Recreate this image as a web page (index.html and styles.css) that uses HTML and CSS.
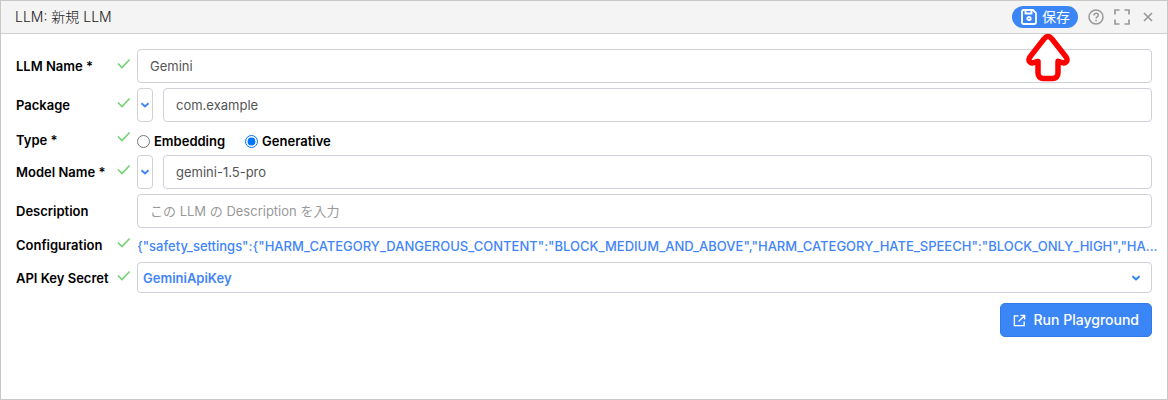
FILE: index.html
```html
<!DOCTYPE html>
<html lang="ja">
<head>
<meta charset="utf-8">
<meta name="viewport" content="width=device-width, initial-scale=1">
<title>LLM: 新規 LLM</title>
<link rel="stylesheet" href="styles.css">
</head>
<body>
<svg class="symbols" aria-hidden="true">
  <symbol id="check" viewBox="0 0 14 12"><path d="M1 5.500 5 9.500 12.600 1.500" fill="none" stroke="currentColor" stroke-width="1.700"/></symbol>
  <symbol id="chevron" viewBox="0 0 10 8"><path d="M1.500 2.200 5 5.400 8.500 2.200" fill="none" stroke="currentColor" stroke-width="2"/></symbol>
</svg>
<main class="dialog">
  <header class="titlebar">
    <h1 class="title">LLM: 新規 LLM</h1>
    <div class="actions">
      <div class="save-wrap">
        <button class="save" type="submit" form="llm-form">
          <svg class="save-icon" viewBox="0 0 16 16" fill="none" stroke="currentColor" stroke-width="1.800" aria-hidden="true"><path d="M2.500 1H12l3 3v9.500a1.500 1.500 0 0 1-1.500 1.500h-11A1.500 1.500 0 0 1 1 13.500v-11A1.500 1.500 0 0 1 2.500 1Z"/><path d="M4.500 1v3.500h6V1"/><circle cx="8" cy="9.500" r="1.700"/></svg>
          保存
        </button>
        <svg class="pointer" viewBox="0 0 44 49" aria-hidden="true"><path d="M22 3.500c1.800 0 2.700.8 4 2.400l14 18c2.600 4.300-.5 7-4.500 5.500l-3.500-1V40c0 3.500-2 5.500-5.500 5.500h-9c-3.500 0-5.500-2-5.500-5.500V28.400l-3.500 1C4.500 30.900 1.400 28.200 4 23.900l14-18c1.300-1.600 2.200-2.400 4-2.400Z" fill="#fff" stroke="#f00" stroke-width="5.500" stroke-linejoin="round"/></svg>
      </div>
      <button class="tool" type="button" aria-label="Help"><svg viewBox="0 0 16 16" fill="none" stroke="currentColor" stroke-width="1.500"><circle cx="8" cy="8" r="7"/><path d="M5.900 6.400c0-2.800 4.400-2.600 4.400-.1C10.300 8 8.100 7.900 8.100 9.500"/><path d="M8.100 10.700v1.500"/></svg></button>
      <button class="tool" type="button" aria-label="Fullscreen"><svg viewBox="0 0 16 16" fill="none" stroke="currentColor" stroke-width="1.700"><path d="M1 5.500V1h4.500M10.500 1H15v4.500M15 10.500V15h-4.500M5.500 15H1v-4.500"/></svg></button>
      <button class="tool" type="button" aria-label="Close"><svg viewBox="0 0 16 16" fill="none" stroke="currentColor" stroke-width="1.700"><path d="m4 4 8 8M12 4l-8 8"/></svg></button>
    </div>
  </header>
  <form class="form" id="llm-form">
    <label class="label" for="name">LLM Name *</label>
    <svg class="check"><use href="#check"/></svg>
    <input class="field" id="name" type="text" value="Gemini">

    <label class="label" for="package">Package</label>
    <svg class="check"><use href="#check"/></svg>
    <div class="combo">
      <button class="picker" type="button" aria-label="Choose package"><svg class="chevron"><use href="#chevron"/></svg></button>
      <input class="field" id="package" type="text" value="com.example">
    </div>

    <span class="label label-type" id="type-label">Type *</span>
    <svg class="check check-type"><use href="#check"/></svg>
    <div class="radios" role="radiogroup" aria-labelledby="type-label">
      <label class="radio"><input type="radio" name="type">Embedding</label>
      <label class="radio"><input type="radio" name="type" checked>Generative</label>
    </div>

    <label class="label" for="model">Model Name *</label>
    <svg class="check"><use href="#check"/></svg>
    <div class="combo">
      <button class="picker" type="button" aria-label="Choose model"><svg class="chevron"><use href="#chevron"/></svg></button>
      <input class="field" id="model" type="text" value="gemini-1.5-pro">
    </div>

    <label class="label" for="description">Description</label>
    <span></span>
    <input class="field" id="description" type="text" placeholder="この LLM の Description を入力">

    <span class="label">Configuration</span>
    <svg class="check"><use href="#check"/></svg>
    <a class="config" href="#configuration">{"safety_settings":{"HARM_CATEGORY_DANGEROUS_CONTENT":"BLOCK_MEDIUM_AND_ABOVE","HARM_CATEGORY_HATE_SPEECH":"BLOCK_ONLY_HIGH","HA...</a>

    <label class="label" for="secret">API Key Secret</label>
    <svg class="check"><use href="#check"/></svg>
    <div class="select-wrap">
      <select class="select" id="secret"><option>GeminiApiKey</option></select>
      <svg class="chevron select-arrow"><use href="#chevron"/></svg>
    </div>

    <button class="run" type="button">
      <svg class="run-icon" viewBox="0 0 14 14" fill="none" stroke="currentColor" stroke-width="1.500" aria-hidden="true"><path d="M6 2H1.500v10.500H12V8M8 1.500h4.500V6M12.500 1.500 6 8"/></svg>
      Run Playground
    </button>
  </form>
</main>
</body>
</html>
```
FILE: styles.css
```css
* { box-sizing: border-box; }

body {
  margin: 0;
  font: 13px/16px Inter, "Noto Sans CJK JP", sans-serif;
  color: #000;
  background: #fff;
}

button, input, select { font: inherit; margin: 0; }
button { cursor: pointer; }
svg { display: block; }
.symbols { display: none; }

.dialog {
  min-height: 100vh;
  border: 1px solid #c8c8c8;
}

.titlebar {
  display: flex;
  align-items: center;
  justify-content: space-between;
  height: 33px;
  padding: 0 11px 0 14px;
  background: #f4f4f4;
  border-bottom: 1px solid #cfcfcf;
}

.title {
  margin: 0;
  font-size: 14px;
  line-height: 20px;
  font-weight: 300;
  color: #222;
}

.actions { display: flex; align-items: center; gap: 10px; }
.save-wrap { position: relative; }

.save {
  display: flex;
  align-items: center;
  gap: 5px;
  height: 22px;
  padding: 0 8px 0 9px;
  border: 0;
  border-radius: 11px;
  background: #3b86f7;
  color: #fff;
  font-size: 14px;
  line-height: 20px;
}

.save-icon { width: 16px; height: 16px; }

.pointer {
  position: absolute;
  z-index: 1;
  top: 27px;
  left: 14px;
  width: 44px;
  height: 49px;
  pointer-events: none;
}

.tool {
  width: 16px;
  height: 16px;
  padding: 0;
  border: 0;
  background: none;
  color: #999;
}

.tool svg { width: 16px; height: 16px; }

.form {
  display: grid;
  grid-template-columns: 101px 20px minmax(0, 1fr);
  grid-template-rows: 34px 34px 23px 34px 34px 24px 31px;
  row-gap: 5px;
  align-items: center;
  padding: 15px;
}

.label { font-weight: 600; white-space: nowrap; }
.label-type, .check-type { align-self: start; }
.label-type { padding-top: 5px; }

.check {
  width: 14px;
  height: 12px;
  margin-bottom: 4px;
  color: #76d275;
}

.check-type { margin-top: 4px; }

.field {
  width: 100%;
  min-width: 0;
  height: 34px;
  padding: 0 12px;
  border: 1px solid #d0d0d8;
  border-radius: 4px;
  background: #fff;
  color: #555;
}

.field::placeholder { color: #999; opacity: 1; }

.combo { display: flex; gap: 10px; }

.picker {
  display: flex;
  align-items: center;
  justify-content: center;
  flex: 0 0 16px;
  height: 34px;
  padding: 0;
  border: 1px solid #d0d0d8;
  border-radius: 4px;
  background: #fff;
  color: #4285f8;
}

.chevron { width: 10px; height: 8px; flex: none; }

.radios { display: flex; gap: 20px; font-weight: 600; padding-top: 5px; }
.radio { display: flex; align-items: center; gap: 4px; }
.radio input { width: 13px; height: 13px; accent-color: #0075ff; }

.config {
  overflow: hidden;
  text-overflow: ellipsis;
  white-space: nowrap;
  padding-top: 1px;
  margin-right: -12px;
  color: #4285f8;
  font-weight: 500;
  text-decoration: none;
}

.select-wrap { position: relative; }

.select {
  display: block;
  appearance: none;
  width: 100%;
  height: 31px;
  padding: 0 30px 0 5px;
  border: 1px solid #d0d0d8;
  border-radius: 4px;
  background: #fff;
  color: #4285f8;
  font-weight: 600;
}

.select-arrow {
  position: absolute;
  top: 12px;
  right: 11px;
  color: #2b83f6;
  pointer-events: none;
}

.run {
  grid-column: 1 / -1;
  justify-self: end;
  display: flex;
  align-items: center;
  gap: 8px;
  height: 34px;
  margin-top: 5px;
  padding: 0 12px;
  border: 1px solid #3079e6;
  border-radius: 5px;
  background: #3b86f7;
  color: #fff;
  font-size: 14px;
  font-weight: 500;
}

.run-icon { width: 13px; height: 13px; }
```
